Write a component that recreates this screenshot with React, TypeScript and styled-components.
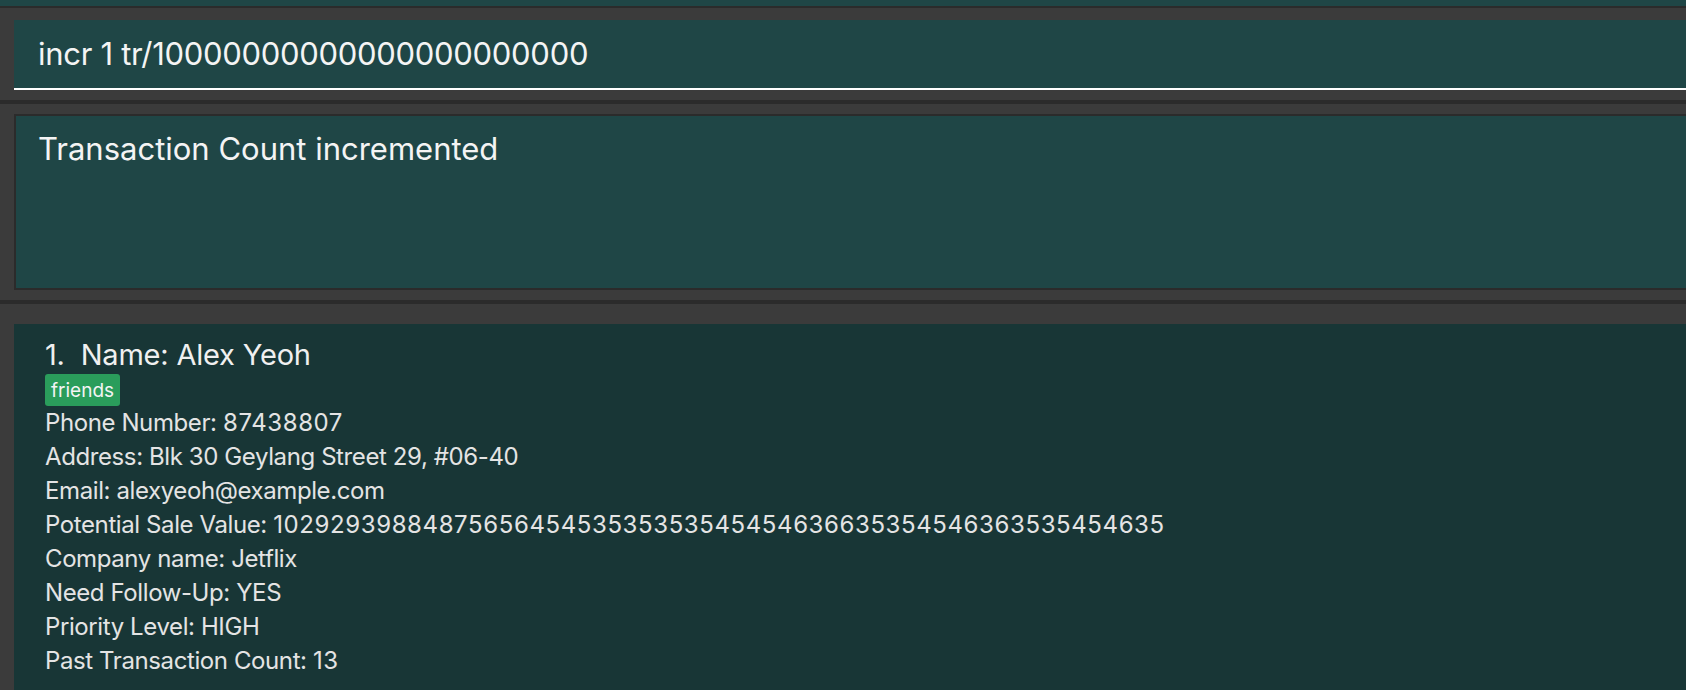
import React from 'react';
import styled, { createGlobalStyle } from 'styled-components';

const GlobalStyle = createGlobalStyle`
  html, body {
    margin: 0;
    padding: 0;
    background: #3b3b3b;
    overflow: hidden;
  }
  body {
    font-family: Inter, Roboto, "Noto Sans", sans-serif;
    color: #f2f2f2;
  }
`;

const WindowStyled = styled.div`
  display: flex;
  flex-direction: column;
  width: 1686px;
  height: 690px;
  overflow: hidden;
  background: #3b3b3b;
`;

const MenuStripStyled = styled.div`
  height: 6px;
  background: #1f4646;
  border-bottom: 2px solid #2b2b2b;
`;

const CommandPaneStyled = styled.div`
  padding: 12px 0 10px 14px;
`;

const CommandFieldStyled = styled.div`
  display: flex;
  align-items: center;
  height: 66px;
  padding: 0 0 2px 24px;
  background: #1f4646;
  border-bottom: 2px solid #ffffff;
  font-size: 31px;
  letter-spacing: -0.3px;
  color: #f4f4f4;
  white-space: nowrap;
`;

const DividerStyled = styled.div`
  height: 4px;
  background: #2b2b2b;
`;

const ResultPaneStyled = styled.div`
  padding: 10px 0 10px 14px;
`;

const ResultBoxStyled = styled.div`
  height: 158px;
  padding: 14px 0 0 22px;
  background: #1f4646;
  border: 2px solid #2b2b2b;
  border-right: none;
  font-size: 31px;
  line-height: 38px;
  color: #f4f4f4;
`;

const ListPaneStyled = styled.div`
  flex: 1;
  padding: 20px 0 0 14px;
`;

const PersonCardStyled = styled.div`
  height: 100%;
  padding: 12px 0 0 31px;
  background: #183636;
`;

const NameStyled = styled.div`
  font-size: 29px;
  line-height: 38px;
  letter-spacing: -0.2px;
  color: #f0f0f0;
  white-space: pre;
`;

const TagRowStyled = styled.div`
  display: flex;
  gap: 6px;
`;

const TagStyled = styled.span`
  display: inline-flex;
  align-items: center;
  height: 32px;
  padding: 0 6px;
  border-radius: 3px;
  background: #2a9d5b;
  font-size: 19px;
  color: #f4f4f4;
`;

const DetailStyled = styled.div`
  font-size: 24px;
  line-height: 34px;
  letter-spacing: -0.4px;
  color: #e4e4e4;
  white-space: nowrap;
`;

const ValueStyled = styled.span<{ $numeric?: boolean }>`
  letter-spacing: ${({ $numeric }) => ($numeric ? '0.6px' : '-0.4px')};
`;

const details = [
  { label: 'Phone Number', value: '87438807' },
  { label: 'Address', value: 'Blk 30 Geylang Street 29, #06-40' },
  { label: 'Email', value: 'alexyeoh@example.com' },
  { label: 'Potential Sale Value', value: '1029293988487565645453535353545454636635354546363535454635' },
  { label: 'Company name', value: 'Jetflix' },
  { label: 'Need Follow-Up', value: 'YES' },
  { label: 'Priority Level', value: 'HIGH' },
  { label: 'Past Transaction Count', value: '13' },
];

const App: React.FC = () => (
  <>
    <GlobalStyle />
    <WindowStyled>
      <MenuStripStyled />
      <CommandPaneStyled>
        <CommandFieldStyled>incr 1 tr/10000000000000000000000</CommandFieldStyled>
      </CommandPaneStyled>
      <DividerStyled />
      <ResultPaneStyled>
        <ResultBoxStyled>Transaction Count incremented</ResultBoxStyled>
      </ResultPaneStyled>
      <DividerStyled />
      <ListPaneStyled>
        <PersonCardStyled>
          <NameStyled>{'1.  Name: Alex Yeoh'}</NameStyled>
          <TagRowStyled>
            <TagStyled>friends</TagStyled>
          </TagRowStyled>
          {details.map(({ label, value }) => (
            <DetailStyled key={label}>
              {label}
              {': '}
              <ValueStyled $numeric={/^\d+$/.test(value)}>{value}</ValueStyled>
            </DetailStyled>
          ))}
        </PersonCardStyled>
      </ListPaneStyled>
    </WindowStyled>
  </>
);

export default App;
